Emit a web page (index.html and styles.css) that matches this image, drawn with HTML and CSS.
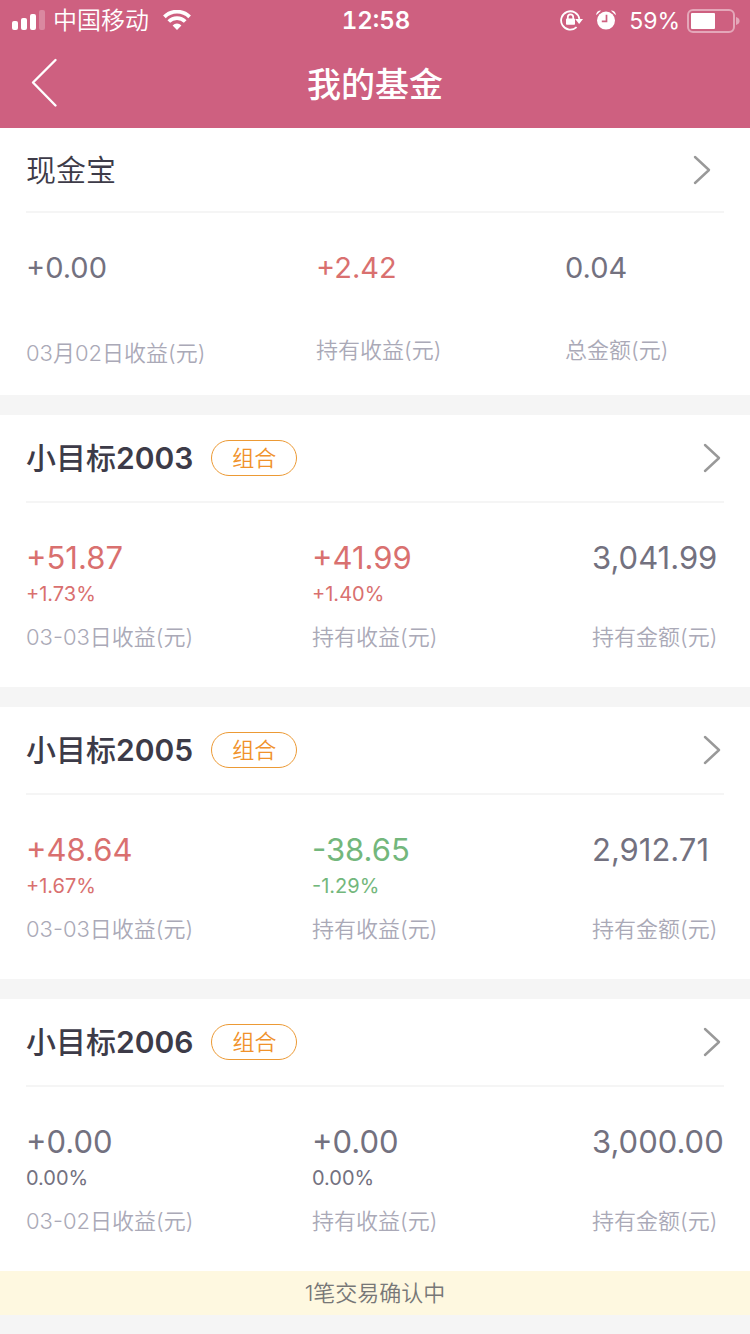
FILE: index.html
```
<!DOCTYPE html>
<html lang="zh-CN">
<head>
<meta charset="utf-8">
<meta name="viewport" content="width=device-width, initial-scale=1">
<title>我的基金</title>
<link rel="stylesheet" href="styles.css">
</head>
<body>
<header class="top">
  <div class="status">
    <div class="status-side">
      <svg class="signal" width="34" height="20" viewBox="0 0 34 20" fill="#fff" aria-hidden="true">
        <rect x="0" y="11" width="6" height="9" rx="2"/>
        <rect x="9" y="8" width="6" height="12" rx="2"/>
        <rect x="18" y="4" width="6" height="16" rx="2"/>
        <rect x="27" y="0" width="6" height="20" rx="2" opacity=".25"/>
      </svg>
      <span class="carrier">中国移动</span>
      <svg class="wifi" width="28" height="20" viewBox="0 0 28 20" aria-hidden="true">
        <g fill="none" stroke="#fff" stroke-width="3.8">
          <path d="M1.4 6.8a18 18 0 0 1 25.2 0"/>
          <path d="M5.8 11.5a11.7 11.7 0 0 1 16.4 0"/>
        </g>
        <path fill="#fff" d="M14 20l-4.4-4.6a6.3 6.3 0 0 1 8.8 0z"/>
      </svg>
    </div>
    <span class="clock">12:58</span>
    <div class="status-side status-right">
      <svg class="lock" width="24" height="22" viewBox="0 0 24 22" aria-hidden="true">
        <path fill="none" stroke="#fff" stroke-width="1.8" d="M16.6 18.2A9.2 9.2 0 1 1 19.4 10"/>
        <path fill="#fff" d="M15.2 10h7.8l-3.9 4.9z"/>
        <rect x="6" y="9.4" width="9" height="6.4" rx=".8" fill="#fff"/>
        <path fill="none" stroke="#fff" stroke-width="1.7" d="M7.8 10V8a2.7 2.7 0 0 1 5.4 0v2"/>
      </svg>
      <svg class="alarm" width="20" height="20" viewBox="0 0 20 20" aria-hidden="true">
        <circle cx="10" cy="10.6" r="9" fill="#fff"/>
        <path fill="#fff" d="M.2 5.2Q0 .7 5.2.6zM19.8 5.2Q20 .7 14.8.6z"/>
        <path fill="none" stroke="#ce6080" stroke-width="1.7" d="M10.5 4.8v6.5H5.8"/>
      </svg>
      <span class="percent">59%</span>
      <svg class="battery" width="53" height="24" viewBox="0 0 53 24" aria-hidden="true">
        <rect x="1" y="1" width="46" height="22" rx="5" fill="none" stroke="#fff" stroke-width="2" opacity=".45"/>
        <rect x="4" y="4" width="24" height="16" rx="1" fill="#fff"/>
        <path d="M49 8q3.6 1.2 3.6 4T49 16z" fill="#fff" opacity=".45"/>
      </svg>
    </div>
  </div>
  <div class="nav">
    <button class="back" type="button" aria-label="返回">
      <svg width="28" height="50" viewBox="0 0 28 50" fill="none" stroke="#fff" stroke-width="2.4" stroke-linecap="round" stroke-linejoin="round" aria-hidden="true"><path d="M25.5 2L3 24.5 25.5 47.5"/></svg>
    </button>
    <h1 class="title">我的基金</h1>
  </div>
</header>

<main class="funds">
  <section class="card cash">
    <a class="card-head" href="#cash">
      <h2 class="name name-plain">现金宝</h2>
      <svg class="chevron" width="18" height="30" viewBox="0 0 18 30" aria-hidden="true"><path d="M2 2l14 13L2 28"/></svg>
    </a>
    <dl class="stats">
      <div class="stat"><dd class="value">+0.00</dd><dt class="label">03月02日收益(元)</dt></div>
      <div class="stat"><dd class="value up">+2.42</dd><dt class="label">持有收益(元)</dt></div>
      <div class="stat"><dd class="value">0.04</dd><dt class="label">总金额(元)</dt></div>
    </dl>
  </section>

  <section class="card">
    <a class="card-head" href="#2003">
      <h2 class="name">小目标<span class="number">2003</span></h2><span class="tag">组合</span>
      <svg class="chevron" width="18" height="30" viewBox="0 0 18 30" aria-hidden="true"><path d="M2 2l14 13L2 28"/></svg>
    </a>
    <dl class="stats">
      <div class="stat"><dd class="value up">+51.87</dd><dd class="rate up">+1.73%</dd><dt class="label">03-03日收益(元)</dt></div>
      <div class="stat"><dd class="value up">+41.99</dd><dd class="rate up">+1.40%</dd><dt class="label">持有收益(元)</dt></div>
      <div class="stat"><dd class="value">3,041.99</dd><dt class="label">持有金额(元)</dt></div>
    </dl>
  </section>

  <section class="card">
    <a class="card-head" href="#2005">
      <h2 class="name">小目标<span class="number">2005</span></h2><span class="tag">组合</span>
      <svg class="chevron" width="18" height="30" viewBox="0 0 18 30" aria-hidden="true"><path d="M2 2l14 13L2 28"/></svg>
    </a>
    <dl class="stats">
      <div class="stat"><dd class="value up">+48.64</dd><dd class="rate up">+1.67%</dd><dt class="label">03-03日收益(元)</dt></div>
      <div class="stat"><dd class="value down">-38.65</dd><dd class="rate down">-1.29%</dd><dt class="label">持有收益(元)</dt></div>
      <div class="stat"><dd class="value">2,912.71</dd><dt class="label">持有金额(元)</dt></div>
    </dl>
  </section>

  <section class="card">
    <a class="card-head" href="#2006">
      <h2 class="name">小目标<span class="number">2006</span></h2><span class="tag">组合</span>
      <svg class="chevron" width="18" height="30" viewBox="0 0 18 30" aria-hidden="true"><path d="M2 2l14 13L2 28"/></svg>
    </a>
    <dl class="stats">
      <div class="stat"><dd class="value">+0.00</dd><dd class="rate">0.00%</dd><dt class="label">03-02日收益(元)</dt></div>
      <div class="stat"><dd class="value">+0.00</dd><dd class="rate">0.00%</dd><dt class="label">持有收益(元)</dt></div>
      <div class="stat"><dd class="value">3,000.00</dd><dt class="label">持有金额(元)</dt></div>
    </dl>
    <p class="notice">1笔交易确认中</p>
  </section>
</main>
</body>
</html>
```
FILE: styles.css
```
* { box-sizing: border-box; }
body, h1, h2, p, dl, dd { margin: 0; }
body {
  background: #f5f5f5;
  color: #73717f;
  font-family: Inter, "Noto Sans CJK SC", sans-serif;
}

.top { background: #ce6080; color: #fff; }
.status {
  display: grid;
  grid-template-columns: 1fr auto 1fr;
  align-items: center;
  height: 42px;
  padding: 0 10px 0 12px;
}
.status-side { display: flex; align-items: center; }
.status-right { justify-content: flex-end; }
.signal, .wifi { margin-bottom: 2px; }
.carrier { margin: 0 14px 0 7px; font-size: 24px; font-weight: 350; line-height: 42px; }
.clock { font-size: 24px; font-weight: 600; line-height: 42px; font-variant-numeric: tabular-nums; }
.lock { margin: 0 12px 2px 0; }
.alarm { margin: 0 13px 2px 0; }
.percent { margin-right: 7px; font-size: 23px; line-height: 42px; }
.nav {
  display: grid;
  grid-template-columns: 60px 1fr 60px;
  align-items: center;
  height: 86px;
}
.back {
  display: flex;
  justify-content: flex-end;
  padding: 0 2px 4px 0;
  border: 0;
  background: none;
}
.title { font-size: 34px; font-weight: 500; line-height: 86px; text-align: center; }

.funds { display: grid; gap: 20px; padding-bottom: 20px; }
.card { background: #fff; }
.card-head {
  display: flex;
  align-items: center;
  height: 88px;
  margin: 0 26px;
  border-bottom: 2px solid #f5f5f5;
  color: inherit;
  text-decoration: none;
}
.name { color: #3d3b48; font-size: 30px; font-weight: 500; line-height: 44px; }
.number { font-weight: 600; }
.name-plain { font-weight: 350; }
.tag {
  height: 36px;
  margin-left: 18px;
  padding: 0 20px;
  border: 1px solid #ec9a35;
  border-radius: 18px;
  color: #f0922b;
  font-size: 22px;
  font-weight: 350;
  line-height: 34px;
}
.chevron {
  margin-left: auto;
  margin-right: 3px;
  fill: none;
  stroke: #999;
  stroke-width: 2.4;
  stroke-linecap: round;
  stroke-linejoin: round;
}
.stats {
  display: grid;
  grid-template-columns: minmax(0, 286fr) minmax(0, 280fr) minmax(0, 132fr);
  align-items: start;
  padding: 35px 26px 32px;
}
.stat {
  display: flex;
  flex-direction: column;
  min-height: 117px;
  white-space: nowrap;
}
.value { font-size: 31px; line-height: 40px; }
.rate { font-size: 20px; line-height: 32px; }
.label { margin-top: auto; color: #aaa9b7; font-size: 22px; font-weight: 350; line-height: 36px; }
.up { color: #d9706f; }
.down { color: #73b77c; }

.cash .card-head { height: 85px; }
.cash .chevron { margin-right: 13px; }
.cash .stats {
  grid-template-columns: minmax(0, 290fr) minmax(0, 249fr) minmax(0, 159fr);
  padding: 35px 26px 24px;
}
.cash .stat { min-height: 120px; }
.cash .stat:first-child { min-height: 123px; }
.cash .value { font-size: 29px; }

.notice {
  background: #fef8e0;
  color: #777;
  font-size: 22px;
  font-weight: 350;
  line-height: 44px;
  text-align: center;
}
```
